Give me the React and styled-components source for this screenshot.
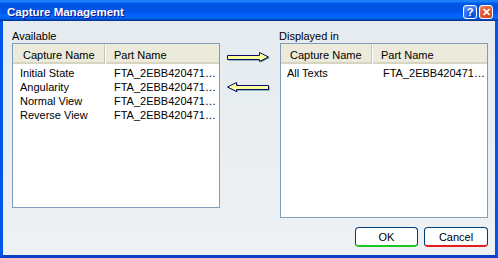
import React from 'react'
import styled, { createGlobalStyle } from 'styled-components'

const GlobalStyle = createGlobalStyle`
  html, body {
    margin: 0;
    padding: 0;
  }
  body {
    width: 498px;
    height: 258px;
    overflow: hidden;
    font-family: "Liberation Sans", Arial, sans-serif;
    font-size: 11px;
    color: #000;
  }
`

const Window = styled.div`
  width: 498px;
  height: 258px;
  display: flex;
  flex-direction: column;
`

const TitleBar = styled.div`
  height: 21px;
  box-sizing: border-box;
  padding: 3px 5px 0 7px;
  display: flex;
  align-items: center;
  justify-content: space-between;
  background: linear-gradient(to bottom, #0058ee 0%, #3593ff 4%, #288eff 6%, #127dff 8%, #036ffc 10%, #0262ee 14%, #0057e5 20%, #0054e3 24%, #0055eb 56%, #005bf5 66%, #026afe 76%, #0062ef 86%, #0052d6 92%, #0040ab 94%, #003092 100%);
`

const Title = styled.div`
  color: #fff;
  font-weight: bold;
  font-size: 11.5px;
  text-shadow: 1px 1px #0f1089;
`

const Controls = styled.div`
  display: flex;
  gap: 2px;
`

const CaptionButton = styled.div`
  width: 14px;
  height: 14px;
  box-sizing: border-box;
  border: 1px solid #fff;
  border-radius: 3px;
  display: flex;
  align-items: center;
  justify-content: center;
  color: #fff;
  font-weight: bold;
  font-size: 11px;
  background: ${p => p.$close
    ? 'radial-gradient(circle at 70% 80%, #cc4622 0%, #e3582f 50%, #f08a6a 100%)'
    : 'radial-gradient(circle at 70% 80%, #0046d5 0%, #2c6ff2 50%, #6d9ff8 100%)'};
`

const Body = styled.div`
  flex: 1;
  border: 3px solid #0055ea;
  border-top: none;
  border-bottom-color: #0a3fc4;
  padding: 9px 7px 8px 9px;
  background: linear-gradient(to bottom, #e5ebef, #eef1f4);
  display: flex;
  flex-direction: column;
`

const Panels = styled.div`
  display: flex;
  align-items: flex-start;
`

const Panel = styled.div`
  width: 208px;
  display: flex;
  flex-direction: column;
`

const Label = styled.div`
  height: 13px;
  line-height: 13px;
  margin-left: ${p => p.$shift || 0}px;
`

const ListBox = styled.div`
  height: ${p => p.$h}px;
  box-sizing: border-box;
  border: 1px solid #7f9db9;
  background: #fff;
  display: flex;
  flex-direction: column;
`

const Header = styled.div`
  height: 20px;
  box-sizing: border-box;
  padding-top: 3px;
  display: flex;
  align-items: center;
  background: #ebeadb;
  border-bottom: 2px solid #d8d4c2;
`

const HeaderCell = styled.div`
  position: relative;
  width: ${p => p.$w}px;
  box-sizing: border-box;
  padding-left: ${p => p.$pad}px;
  white-space: nowrap;
  &::after {
    content: ${p => (p.$sep ? '""' : 'none')};
    position: absolute;
    right: 0;
    top: -4px;
    bottom: -3px;
    width: 1px;
    background: #c7c5b2;
    box-shadow: 1px 0 #fff;
  }
`

const Rows = styled.div`
  padding-top: 2px;
`

const Row = styled.div`
  display: flex;
  height: 14px;
  line-height: 14px;
`

const Cell = styled.div`
  width: ${p => (p.$w ? p.$w + 'px' : 'auto')};
  box-sizing: border-box;
  padding-left: ${p => p.$pad || 0}px;
  white-space: nowrap;
`

const ArrowColumn = styled.div`
  width: 60px;
  box-sizing: border-box;
  padding: 21px 0 0 7px;
  display: flex;
  flex-direction: column;
  gap: 17px;
  svg {
    display: block;
  }
`

const Footer = styled.div`
  display: flex;
  justify-content: flex-end;
  gap: 6px;
  margin-top: 9px;
`

const Button = styled.div`
  width: ${p => p.$w}px;
  height: 20px;
  box-sizing: border-box;
  background: #fff;
  border: 1px solid #003c74;
  border-bottom: 2px solid ${p => p.$accent};
  border-radius: 4px;
  display: flex;
  align-items: center;
  justify-content: center;
`

const RightArrow = () => (
  <svg width="44" height="13" viewBox="0 0 44 13">
    <path d="M1.5 5.5 H33.5 V2.5 L42.5 7 L33.5 11.5 V9.5 H1.5 Z" fill="#2f8a8a" />
    <path d="M0.5 4.5 H32.5 V1.5 L41.5 6 L32.5 10.5 V8.5 H0.5 Z" fill="#ffff99" stroke="#0a0a6e" strokeWidth="1" />
  </svg>
)

const LeftArrow = () => (
  <svg width="44" height="13" viewBox="0 0 44 13">
    <path d="M1.5 7 L10.5 2.5 V5.5 H42.5 V9.5 H10.5 V11.5 Z" fill="#2f8a8a" />
    <path d="M0.5 6 L9.5 1.5 V4.5 H41.5 V8.5 H9.5 V10.5 Z" fill="#ffff99" stroke="#0a0a6e" strokeWidth="1" />
  </svg>
)

const part = 'FTA_2EBB420471…'

const CaptureList = ({ height, cols, items }) => (
  <ListBox $h={height}>
    <Header>
      <HeaderCell $w={cols.head} $pad={cols.headPad} $sep>Capture Name</HeaderCell>
      <HeaderCell $pad={cols.partPad}>Part Name</HeaderCell>
    </Header>
    <Rows>
      {items.map(name => (
        <Row key={name}>
          <Cell $w={cols.row} $pad={cols.rowPad}>{name}</Cell>
          <Cell>{part}</Cell>
        </Row>
      ))}
    </Rows>
  </ListBox>
)

const App = () => (
  <Window>
    <GlobalStyle />
    <TitleBar>
      <Title>Capture Management</Title>
      <Controls>
        <CaptionButton>?</CaptionButton>
        <CaptionButton $close>✕</CaptionButton>
      </Controls>
    </TitleBar>
    <Body>
      <Panels>
        <Panel>
          <Label>Available</Label>
          <CaptureList
            height={165}
            cols={{ head: 92, headPad: 10, partPad: 9, row: 101, rowPad: 7 }}
            items={['Initial State', 'Angularity', 'Normal View', 'Reverse View']}
          />
        </Panel>
        <ArrowColumn>
          <RightArrow />
          <LeftArrow />
        </ArrowColumn>
        <Panel>
          <Label $shift={-1}>Displayed in</Label>
          <CaptureList
            height={175}
            cols={{ head: 91, headPad: 9, partPad: 9, row: 102, rowPad: 6 }}
            items={['All Texts']}
          />
        </Panel>
      </Panels>
      <Footer>
        <Button $w={63} $accent="#1fc81f">OK</Button>
        <Button $w={64} $accent="#e81c1c">Cancel</Button>
      </Footer>
    </Body>
  </Window>
)

export default App
